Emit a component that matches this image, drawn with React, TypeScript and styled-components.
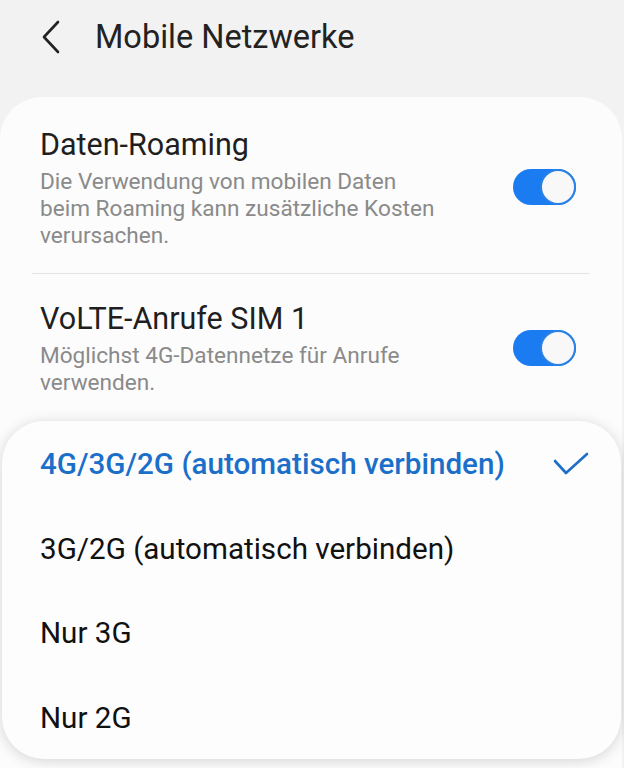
import styled, { createGlobalStyle } from "styled-components";

const Global = createGlobalStyle`
  html, body {
    margin: 0;
    padding: 0;
    background: #f2f2f2;
    font-family: Roboto, "Noto Sans", sans-serif;
  }
`;

const Screen = styled.div`
  position: relative;
  width: 624px;
  height: 768px;
  overflow: hidden;
  background: #f2f2f2;
`;

const Header = styled.header`
  display: flex;
  align-items: center;
  height: 74px;
  padding-left: 40px;
  gap: 33px;
  color: #222;
  h1 {
    margin: 0;
    font-size: 32.5px;
    font-weight: 400;
  }
`;

const Card = styled.section`
  margin: 23px 2px 0 0;
  background: #fcfcfc;
  border-radius: 42px;
  padding: 28px 32px 40px 32px;
  height: 640px;
`;

const Row = styled.div`
  display: flex;
  align-items: center;
  justify-content: space-between;
  padding: 0 14px 0 8px;
`;

const RowText = styled.div`
  display: flex;
  flex-direction: column;
`;

const Title = styled.div`
  font-size: 30.5px;
  color: #1f1f1f;
  line-height: 40px;
`;

const Sub = styled.div`
  margin-top: 3px;
  font-size: 22.6px;
  color: #8a8a8a;
  line-height: 27px;
  max-width: 406px;
`;

const Divider = styled.hr`
  border: none;
  height: 1px;
  background: #e4e4e4;
  margin: 24px 0 25px 0;
`;

const Switch = styled.div<{ on: boolean }>`
  position: relative;
  width: 63px;
  height: 36px;
  border-radius: 18px;
  background: ${(p) => (p.on ? "#1a7cf0" : "#bbb")};
  flex-shrink: 0;
  &::after {
    content: "";
    position: absolute;
    top: 0;
    right: ${(p) => (p.on ? "0" : "27px")};
    width: 32px;
    height: 32px;
    border-radius: 50%;
    background: #f8f8f8;
    border: 2px solid #2a82e6;
  }
`;

const Sheet = styled.div`
  position: absolute;
  left: 2px;
  right: 3px;
  top: 421px;
  height: 337px;
  background: #fdfdfd;
  border-radius: 42px;
  box-shadow: 0 2px 14px rgba(0, 0, 0, 0.16);
  padding-top: 1px;
`;

const Option = styled.div<{ selected?: boolean }>`
  display: flex;
  align-items: center;
  justify-content: space-between;
  height: 84.5px;
  padding: 0 32px 0 38px;
  font-size: 29.6px;
  color: ${(p) => (p.selected ? "#1b6fc9" : "#111")};
  font-weight: ${(p) => (p.selected ? 500 : 400)};
`;

const options = [
  "4G/3G/2G (automatisch verbinden)",
  "3G/2G (automatisch verbinden)",
  "Nur 3G",
  "Nur 2G",
];

export default function App() {
  return (
    <Screen>
      <Global />
      <Header>
        <svg width="22" height="34" viewBox="0 0 22 34">
          <path d="M18 2 L4 17 L18 32" fill="none" stroke="#222" strokeWidth="2.6" strokeLinecap="round" strokeLinejoin="round" />
        </svg>
        <h1>Mobile Netzwerke</h1>
      </Header>
      <Card>
        <Row>
          <RowText>
            <Title>Daten-Roaming</Title>
            <Sub>Die Verwendung von mobilen Daten beim Roaming kann zusätzliche Kosten verursachen.</Sub>
          </RowText>
          <Switch on />
        </Row>
        <Divider />
        <Row>
          <RowText>
            <Title>VoLTE-Anrufe SIM 1</Title>
            <Sub>Möglichst 4G-Datennetze für Anrufe verwenden.</Sub>
          </RowText>
          <Switch on />
        </Row>
      </Card>
      <Sheet>
        {options.map((o, i) => (
          <Option key={o} selected={i === 0}>
            <span>{o}</span>
            {i === 0 && (
              <svg width="36" height="26" viewBox="0 0 36 26">
                <path d="M2 10 L13 22 L34 3" fill="none" stroke="#1b6fc9" strokeWidth="2.6" strokeLinecap="round" strokeLinejoin="round" />
              </svg>
            )}
          </Option>
        ))}
      </Sheet>
    </Screen>
  );
}
